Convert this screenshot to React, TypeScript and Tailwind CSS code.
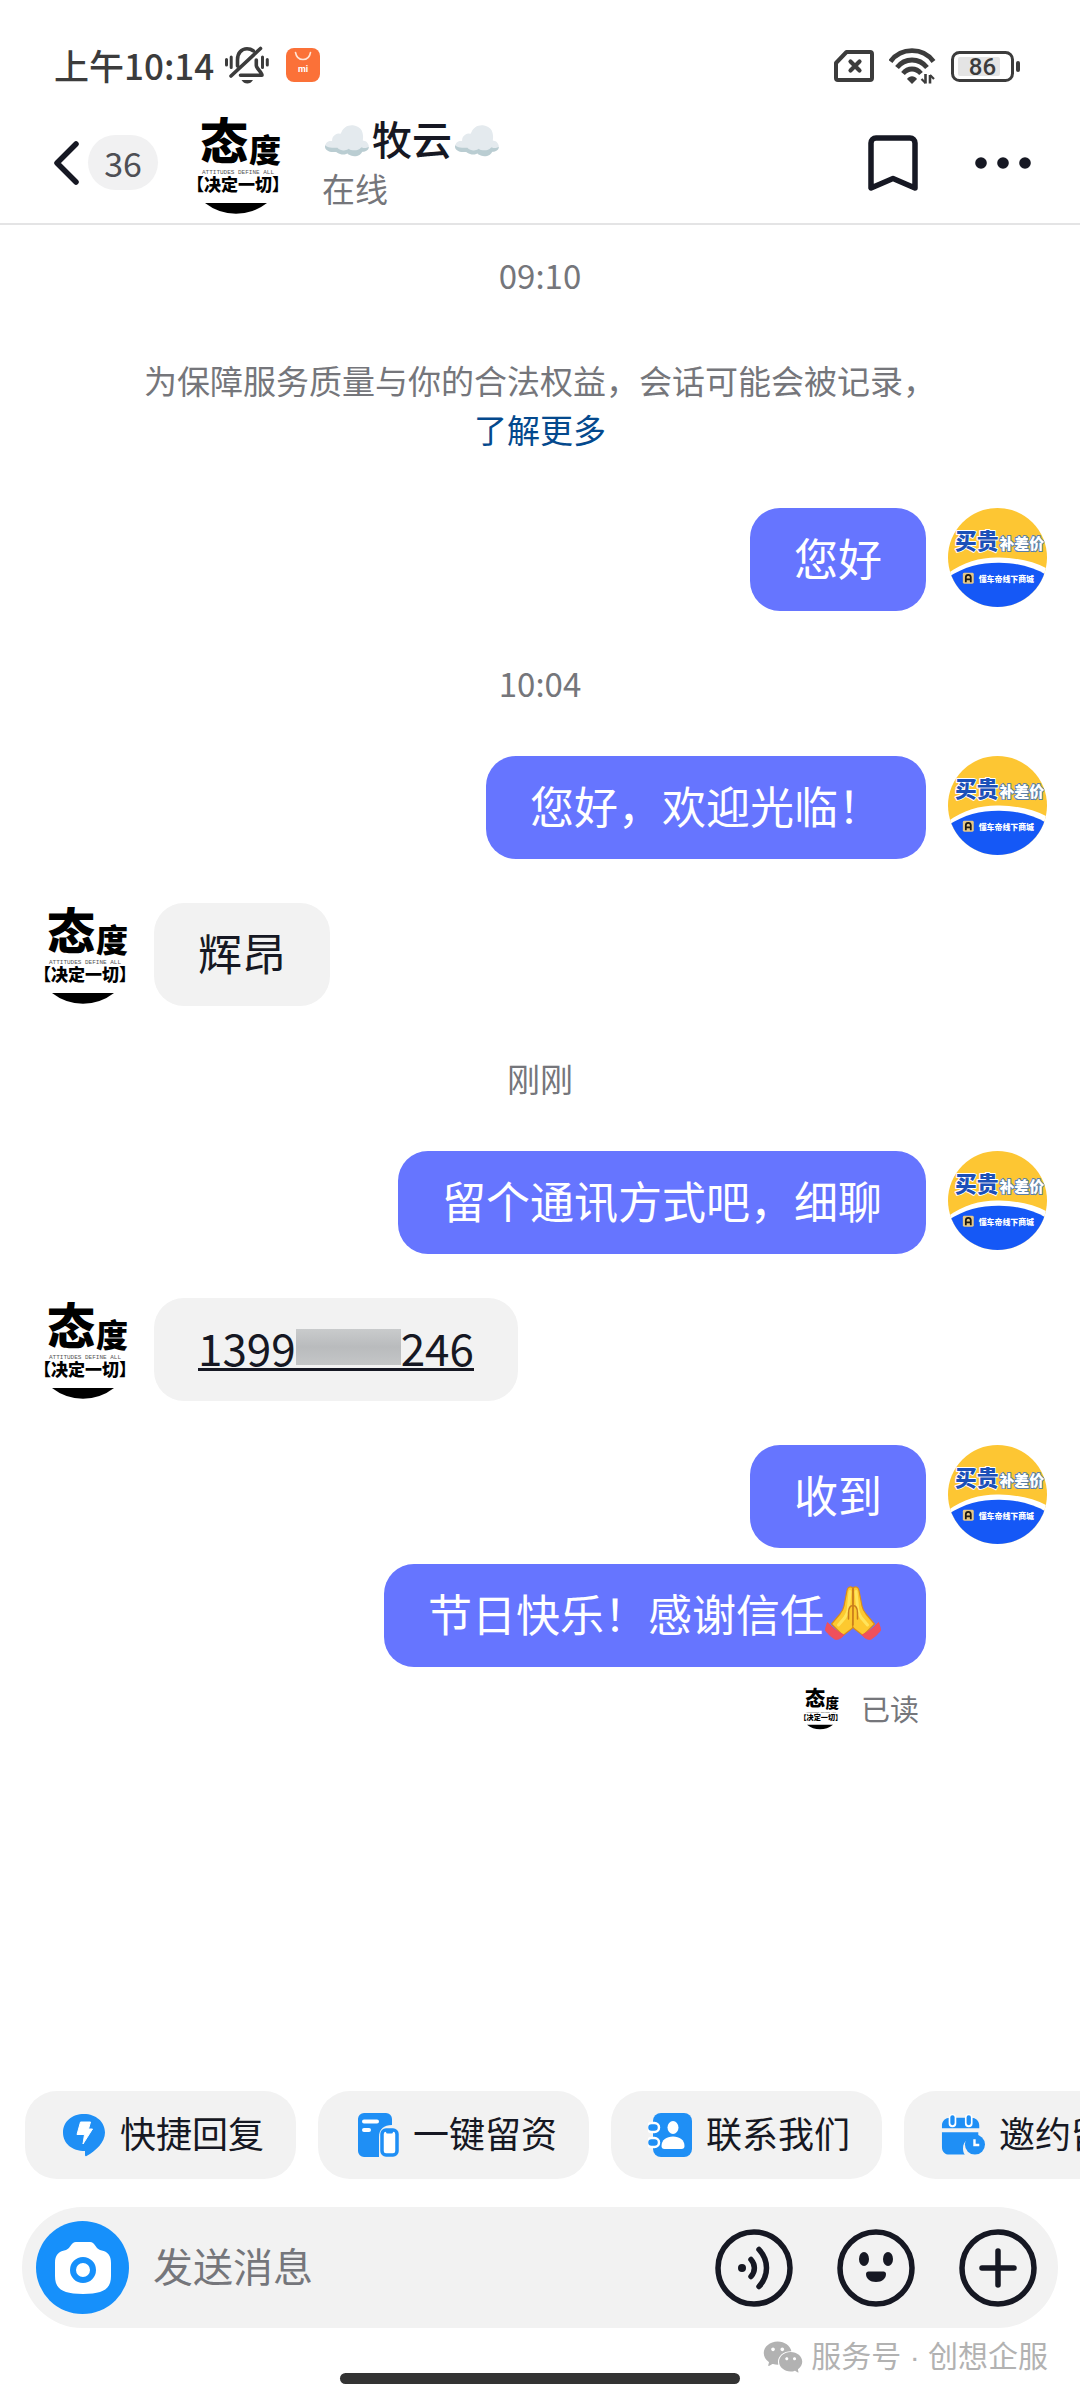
import React from "react";
import { AiFillWechat } from "react-icons/ai";

type Message = {
  id: number;
  from: "me" | "them";
  content: React.ReactNode;
  grouped?: boolean;
};

const MutedBellIcon = () => (
  <svg width="46" height="38" viewBox="0 0 46 38" fill="none" stroke="#3c3c3c" strokeLinecap="round" strokeLinejoin="round">
    <path strokeWidth="3.6" d="M13.5 20v-6.500C13.500 7 17.500 2.800 23 2.800c2.500 0 4.500.6 6.200 1.900M7 30 36.500 2.500M32.300 14v5.500c0 3 5.700 6.800 5.700 9.800H16.500" />
    <path strokeWidth="3" d="M2.500 13.500v5.500M7.200 11v10.500M38.500 11v10.500M43.300 13.500v5.500" />
    <path fill="#3c3c3c" stroke="none" d="M17.500 34h11.500c-1.500 2.400-3.300 3.600-5.700 3.600S19 36.400 17.500 34z" />
  </svg>
);

const StoreIcon = () => (
  <svg width="34" height="34" viewBox="0 0 34 34">
    <rect width="34" height="34" rx="8" fill="#fb7138" />
    <path d="M9.500 4.500c.8 4.600 3.600 7 7.500 7s6.700-2.400 7.500-7" fill="none" stroke="#ffe3d4" strokeWidth="1.600" strokeLinecap="round" />
    <text x="17" y="23.500" textAnchor="middle" fill="#fff" fontSize="9" fontWeight="700" fontFamily="Roboto, sans-serif">
      mi
    </text>
  </svg>
);

const SimIcon = () => (
  <svg width="40" height="32" viewBox="0 0 40 32" fill="none" stroke="#3c3c3c" strokeLinejoin="round" strokeLinecap="round">
    <path strokeWidth="4" d="M12.500 2H36a2 2 0 0 1 2 2v24a2 2 0 0 1-2 2H4a2 2 0 0 1-2-2V13z" />
    <path strokeWidth="4.200" d="m16.500 11.500 9 9M25.500 11.500l-9 9" />
  </svg>
);

const WifiIcon = () => (
  <svg width="47" height="36" viewBox="0 0 47 36" fill="none" stroke="#3c3c3c">
    <path strokeWidth="4.800" d="M1.500 13.500C7 6 14.500 2.700 23 2.700S39 6 44.500 13.500" />
    <path strokeWidth="4.800" d="M8 19.500c4-5 9-7.500 15-7.500s11 2.500 15 7.500" />
    <path strokeWidth="4.800" d="M14 25.500c2.500-3 5.500-4.500 9-4.500s6.500 1.500 9 4.500" />
    <path fill="#3c3c3c" stroke="none" d="M18 31c1.300-1.800 3-2.700 5-2.700s3.700.9 5 2.700L23 36z" />
    <path strokeWidth="2.600" d="M36.500 26v9.500M41 35.500V27" />
    <path strokeWidth="2.200" d="m32.500 31 4 4M41 27l4 4" />
  </svg>
);

const BatteryIcon = () => (
  <svg width="70" height="31" viewBox="0 0 70 31" role="img" aria-label="86%">
    <rect x="1.500" y="1.500" width="60" height="28" rx="7" fill="none" stroke="#3c3c3c" strokeWidth="3" />
    <rect x="7" y="6" width="42" height="19" rx="2" fill="#e4e4e4" />
    <rect x="65" y="10" width="4" height="11" rx="2" fill="#3c3c3c" />
    <text x="31.500" y="24" textAnchor="middle" fill="#3c3c3c" fontSize="24" fontWeight="500" fontFamily="Roboto, sans-serif">
      86
    </text>
  </svg>
);

const TheirAvatar = ({ className }: { className: string }) => (
  <svg className={`shrink-0 overflow-visible ${className}`} viewBox="0 0 100 100" role="img" aria-label="牧云">
    <g fontFamily="'Noto Sans CJK SC', sans-serif" fontWeight="900">
      <text x="14" y="46" fontSize="48">态</text>
      <text x="63" y="49" fontSize="32">度</text>
      <text x="1" y="78" fontSize="17">【决定一切】</text>
    </g>
    <text x="16" y="61" fontSize="6" fill="#555" fontFamily="'Liberation Mono', monospace">
      ATTITUDES DEFINE ALL
    </text>
    <path d="M19 90h62a50 50 0 0 1-62 0z" />
  </svg>
);

const MyAvatar = () => (
  <svg className="size-[99px] shrink-0 rounded-full" viewBox="0 0 100 100" role="img" aria-label="我">
    <rect width="100" height="100" fill="#fdc633" />
    <path d="M0 66C16 54 34 49.500 52 50c18 .4 34 4 48 11v39H0z" fill="#fff" />
    <path d="M0 70C16 59 34 55 52 55.200c18 .3 34 4.300 48 12.800v32H0z" fill="#1558f6" />
    <g fontFamily="'Noto Sans CJK SC', sans-serif" fontWeight="900" paintOrder="stroke" strokeLinejoin="round">
      <text x="7" y="41" fontSize="22" fill="#1c50b8" stroke="#fff" strokeWidth="2">买贵</text>
      <text x="52" y="41" fontSize="15" fill="#fff" stroke="#5a7fa8" strokeWidth="2">补差价</text>
      <text x="31" y="75" fontSize="8" fill="#fff">懂车帝线下商城</text>
    </g>
    <rect x="15" y="65.500" width="11" height="11" rx="1.500" fill="#e6c886" />
    <path d="M18 75v-5a2.500 2.500 0 0 1 5 0v5M18 72h5" fill="none" stroke="#1d1a12" strokeWidth="1.800" />
  </svg>
);

const FoldedHands = () => (
  <svg width="58" height="54" viewBox="0 0 58 54" role="img" aria-label="🙏">
    <path d="M28.500 1.500c-2.500-1.500-5-.3-5.500 3L20 20c-.6 3-2 5.500-4 8L7.500 38 19 49.500l9-7c1-.8 1.500-2 1.500-3.500z" fill="#fdc92f" stroke="#d98a1c" strokeWidth="1.200" />
    <path d="M29.500 1.500c2.500-1.500 5-.3 5.500 3L38 20c.6 3 2 5.500 4 8l8.500 10L39 49.500l-9-7c-1-.8-1.500-2-1.500-3.500z" fill="#fdc92f" stroke="#d98a1c" strokeWidth="1.200" />
    <path d="M26 5.500 24.500 21c0 5-2 8-4 11l-6 7M32 5.500 33.500 21c0 5 2 8 4 11l6 7" fill="none" stroke="#ffe45c" strokeWidth="3" strokeLinecap="round" />
    <path d="M29 3v36M29 20c-2.500-1-4.500 2-4.500 7v6M29 20c2.500-1 4.500 2 4.500 7v6" fill="none" stroke="#c97d1c" strokeWidth="1.500" strokeLinecap="round" />
    <path d="M3.500 36.500c-1 3-2 5.500-2 8 3 4 6 6.500 10 9 3 0 5.500-1 8.500-4.500C14 46 8 42 3.500 36.500z" fill="#f0505c" stroke="#f0505c" strokeLinejoin="round" />
    <path d="M54.500 36.500c1 3 2 5.500 2 8-3 4-6 6.500-10 9-3 0-5.500-1-8.500-4.500 6-3 12-7 16.500-12.500z" fill="#f0505c" stroke="#f0505c" strokeLinejoin="round" />
  </svg>
);

const QuickReplyIcon = () => (
  <svg width="44" height="44" viewBox="0 0 44 44">
    <path d="M22 1c12 0 21 8 21 18.500C43 29 34 38 24.500 43c-1 .5-1.500 0-1.500-1v-4C10 38 1 30.500 1 19.500S10 1 22 1z" fill="#1f8ff5" />
    <path d="M18.500 9h10l-2 7h4L21 31l1.500-9.500H15z" fill="#fff" stroke="#fff" strokeLinejoin="round" />
  </svg>
);

const FormIcon = () => (
  <svg width="44" height="44" viewBox="0 0 44 44">
    <path d="M9 0h22a6 6 0 0 1 6 6v6c-8 0-13 4-13 12v20H9a6 6 0 0 1-6-6V6a6 6 0 0 1 6-6z" fill="#1f8ff5" />
    <path d="M9 8.500h13M9 17h5" stroke="#fff" strokeWidth="4" strokeLinecap="round" />
    <rect x="27" y="17" width="15" height="25" rx="4" fill="#fff" stroke="#1f8ff5" strokeWidth="3.500" />
    <path d="M31 17.500h7v1.500a1.500 1.500 0 0 1-1.500 1.500h-4A1.500 1.500 0 0 1 31 19z" fill="#1f8ff5" />
  </svg>
);

const ContactIcon = () => (
  <svg width="44" height="44" viewBox="0 0 44 44">
    <rect x="5" width="39" height="44" rx="8" fill="#1f8ff5" />
    <rect x="-1" y="10" width="12" height="9" rx="4.500" fill="#1f8ff5" stroke="#fff" strokeWidth="2.500" />
    <rect x="-1" y="25" width="12" height="9" rx="4.500" fill="#1f8ff5" stroke="#fff" strokeWidth="2.500" />
    <ellipse cx="25" cy="14.500" rx="5.500" ry="6.500" fill="#fff" />
    <path d="M13.500 33c0-6 5-9.500 11.500-9.500S36.500 27 36.500 33c0 2-1 3-3 3h-17c-2 0-3-1-3-3z" fill="#fff" />
  </svg>
);

const CalendarIcon = () => (
  <svg width="44" height="44" viewBox="0 0 46 44">
    <path d="M9 4h23c4 0 8 3 8 8v3H1v-3c0-5 4-8 8-8zM1 19h38v4c-9 0-16 5-16 13 0 2 .5 5 2 6.500H9c-5 0-8-3-8-8z" fill="#1f8ff5" />
    <path d="M12 4v6M29 4v6" stroke="#fff" strokeWidth="8" strokeLinecap="round" />
    <path d="M12 3.500v6M29 3.500v6" stroke="#1f8ff5" strokeWidth="4.500" strokeLinecap="round" />
    <circle cx="35.500" cy="32" r="10.500" fill="#1f8ff5" />
    <path d="M35 26.500v6h5" fill="none" stroke="#fff" strokeWidth="2.500" />
  </svg>
);

const CameraIcon = () => (
  <svg width="56" height="52" viewBox="0 0 56 52">
    <path d="M21 0h14c5 0 5 6 10 8 8 1.500 11 5.500 11 13v13c0 12-6 18-28 18S0 46 0 34V21C0 13.500 3 9.500 11 8c5-2 5-8 10-8z" fill="#fff" />
    <circle cx="28" cy="28" r="10" fill="none" stroke="#1690fb" strokeWidth="6" />
  </svg>
);

const VoiceIcon = () => (
  <svg width="78" height="78" viewBox="0 0 78 78" fill="none" stroke="#161823" strokeWidth="5.500" strokeLinecap="round">
    <circle cx="39" cy="39" r="36" />
    <circle cx="27" cy="39" r="4" fill="#161823" stroke="none" />
    <path d="M36 30.500c4.500 5 4.500 12 0 17M44 20.500c10 11 10 26 0 37" />
  </svg>
);

const SmileIcon = () => (
  <svg width="78" height="78" viewBox="0 0 78 78" fill="#161823">
    <circle cx="39" cy="39" r="36" fill="none" stroke="#161823" strokeWidth="5.500" />
    <ellipse cx="27" cy="30" rx="5" ry="7" />
    <ellipse cx="51" cy="30" rx="5" ry="7" />
    <path d="M29 45c0-1.500 1-2.500 2.500-2.500h15c1.500 0 2.500 1 2.500 2.500 0 4.500-4 8-10 8s-10-3.500-10-8z" />
  </svg>
);

const PlusIcon = () => (
  <svg width="78" height="78" viewBox="0 0 78 78" fill="none" stroke="#161823" strokeWidth="5.500" strokeLinecap="round">
    <circle cx="39" cy="39" r="36" />
    <path d="M39 22v34M23 39h32" />
  </svg>
);

const quickActions = [
  { label: "快捷回复", icon: <QuickReplyIcon /> },
  { label: "一键留资", icon: <FormIcon /> },
  { label: "联系我们", icon: <ContactIcon /> },
  { label: "邀约留资", icon: <CalendarIcon /> },
];

const MaskedPhone = () => (
  <a href="#phone" className="mt-1 flex items-center border-b-3 border-[#161823] leading-[42px]">
    1399
    <span className="h-9 w-[105px] bg-linear-to-b from-[#c9cbcc] via-[#b9bbbd] to-[#c4c6c7]" />
    246
  </a>
);

const threads: { time: string; messages: Message[] }[] = [
  {
    time: "10:04",
    messages: [
      { id: 2, from: "me", content: "您好，欢迎光临！" },
      { id: 3, from: "them", content: "辉昂" },
    ],
  },
  {
    time: "刚刚",
    messages: [
      { id: 4, from: "me", content: "留个通讯方式吧，细聊" },
      { id: 5, from: "them", content: <MaskedPhone /> },
      { id: 6, from: "me", content: "收到" },
      {
        id: 7,
        from: "me",
        content: (
          <>
            节日快乐！感谢信任
            <FoldedHands />
          </>
        ),
        grouped: true,
      },
    ],
  },
];

const TimeLabel = ({ children }: { children: React.ReactNode }) => (
  <time className="block text-center text-[33px] leading-[49px] text-[#75767b]">{children}</time>
);

const MessageRow = ({ message }: { message: Message }) => {
  if (message.from === "them") {
    return (
      <div className="flex items-start gap-[21px]">
        <TheirAvatar className="size-[100px]" />
        <div className="flex h-[103px] items-center rounded-[30px] bg-[#f2f2f2] px-11 pb-1.5 text-[44px] text-[#161823]">
          {message.content}
        </div>
      </div>
    );
  }

  return (
    <div className={`flex items-start justify-end gap-[22px] ${message.grouped ? "-mt-7" : ""}`}>
      <div className="flex h-[103px] items-center rounded-[30px] bg-[#6675ff] px-11 pb-1.5 text-[44px] text-white">
        {message.content}
      </div>
      {message.grouped ? <div className="w-[99px] shrink-0" /> : <MyAvatar />}
    </div>
  );
};

const StatusBar = () => (
  <div className="flex h-[66px] items-end justify-between pr-[59px] pl-[54px] text-[#3c3c3c]">
    <div className="flex items-center">
      <span className="text-[35px] leading-9 font-medium">上午10:14</span>
      <span className="ml-2.5">
        <MutedBellIcon />
      </span>
      <span className="ml-4">
        <StoreIcon />
      </span>
    </div>
    <div className="flex items-center gap-[15px]">
      <SimIcon />
      <WifiIcon />
      <BatteryIcon />
    </div>
  </div>
);

const Header = () => (
  <header className="border-b-2 border-[#e4e4e5] pt-[18px]">
    <StatusBar />
    <div className="flex h-[139px] items-center pt-[18px] pr-12 pl-[52px]">
      <button type="button" aria-label="返回" className="flex items-center gap-2">
        <svg width="28" height="44" viewBox="0 0 28 44" fill="none" stroke="#161823" strokeWidth="5.500" strokeLinecap="round" strokeLinejoin="round">
          <path d="M24 3 5 22l19 19" />
        </svg>
        <span className="flex h-[55px] w-[70px] items-center justify-center rounded-full bg-[#f1f1f2] text-[34px] text-[#4e4f55]">
          36
        </span>
      </button>
      <span className="ml-7">
        <TheirAvatar className="size-[100px]" />
      </span>
      <div className="ml-9 flex-1">
        <h1 className="text-[40px] leading-[50px] font-medium text-[#161823]">☁️牧云☁️</h1>
        <p className="text-[33px] leading-[50px] text-[#75767b]">在线</p>
      </div>
      <div className="flex items-center gap-14">
        <button type="button" aria-label="收藏">
          <svg width="50" height="56" viewBox="0 0 50 56" fill="none" stroke="#161823" strokeWidth="5.500" strokeLinejoin="round">
            <path d="M3 53V8a5 5 0 0 1 5-5h34a5 5 0 0 1 5 5v45L25 43.500z" />
          </svg>
        </button>
        <button type="button" aria-label="更多">
          <svg width="58" height="14" viewBox="0 0 58 14" fill="#161823">
            <circle cx="7" cy="7" r="5.800" />
            <circle cx="29" cy="7" r="5.800" />
            <circle cx="51" cy="7" r="5.800" />
          </svg>
        </button>
      </div>
    </div>
  </header>
);

const Composer = () => (
  <footer className="overflow-hidden pb-4">
    <div className="flex gap-[22px] pl-[25px]">
      {quickActions.map((action) => (
        <button
          key={action.label}
          type="button"
          className="flex h-[88px] shrink-0 items-center gap-3.5 rounded-[32px] bg-[#f2f2f2] pr-8 pl-[37px] text-[36px] text-[#161823]"
        >
          {action.icon}
          <span className="pb-1.5">{action.label}</span>
        </button>
      ))}
    </div>

    <form className="mx-[22px] mt-7 flex h-[121px] items-center rounded-full bg-[#f2f2f2] pr-[21px] pl-3.5">
      <button type="button" aria-label="拍照" className="flex size-[93px] shrink-0 items-center justify-center rounded-full bg-[#1690fb]">
        <CameraIcon />
      </button>
      <input
        type="text"
        aria-label="发送消息"
        placeholder="发送消息"
        className="ml-6 min-w-0 flex-1 bg-transparent pb-1.5 text-[40px] outline-none placeholder:text-[#75767b]"
      />
      <div className="flex gap-11">
        <button type="button" aria-label="语音">
          <VoiceIcon />
        </button>
        <button type="button" aria-label="表情">
          <SmileIcon />
        </button>
        <button type="button" aria-label="更多功能">
          <PlusIcon />
        </button>
      </div>
    </form>

    <div className="mt-3 flex h-[33px] items-center justify-end gap-1.5 pr-8 text-[30px] text-[#b2b2b2]">
      <AiFillWechat size={44} />
      <span className="font-['Liberation_Sans','Noto_Sans_CJK_SC',sans-serif]">服务号 · 创想企服</span>
    </div>
    <div className="mx-auto h-[11px] w-[400px] rounded-full bg-[#333]" />
  </footer>
);

export default function App() {
  return (
    <div className="flex min-h-screen flex-col bg-white font-['Noto_Sans_CJK_SC',sans-serif]">
      <Header />

      <main className="flex-1 px-[33px] pt-[26px]">
        <TimeLabel>09:10</TimeLabel>
        <p className="mt-14 mb-[54px] text-center text-[33px] leading-[49px] text-[#75767b]">
          为保障服务质量与你的合法权益，会话可能会被记录，
          <br />
          <a href="#more" className="text-[#04498d]">
            了解更多
          </a>
        </p>
        <MessageRow message={{ id: 1, from: "me", content: "您好" }} />

        {threads.map((thread) => (
          <section key={thread.time} className="mt-12">
            <TimeLabel>{thread.time}</TimeLabel>
            <div className="mt-12 flex flex-col gap-11">
              {thread.messages.map((message) => (
                <MessageRow key={message.id} message={message} />
              ))}
            </div>
          </section>
        ))}

        <div className="mt-5 flex items-center justify-end gap-5 pr-32 text-[29px] leading-[42px] text-[#75767b]">
          <TheirAvatar className="size-[42px]" />
          已读
        </div>
      </main>

      <Composer />
    </div>
  );
}
